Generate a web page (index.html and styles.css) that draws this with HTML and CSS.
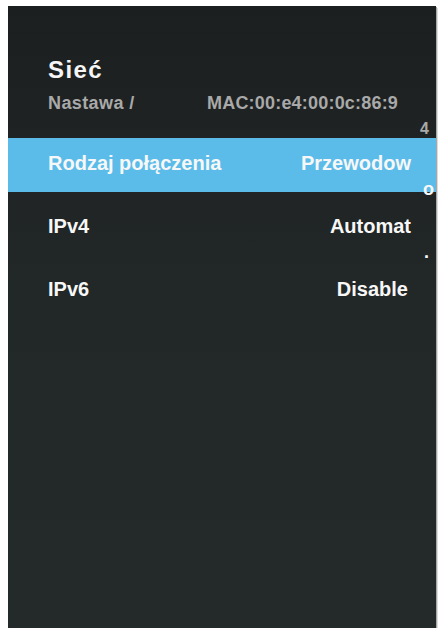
FILE: index.html
```html
<!DOCTYPE html>
<html lang="pl">
<head>
<meta charset="utf-8">
<title>Sieć</title>
<link rel="stylesheet" href="styles.css">
</head>
<body>
<div class="panel">
  <div class="header">
    <div class="title">Sieć</div>
    <div class="sub">
      <span class="crumb">Nastawa /</span>
      <span class="mac">MAC:00:e4:00:0c:86:9</span>
    </div>
    <div class="wrap-line">4</div>
  </div>
  <div class="list">
    <div class="row active">
      <span class="label">Rodzaj połączenia</span>
      <span class="value">Przewodow</span>
      <span class="tail tail-o">o</span>
    </div>
    <div class="row">
      <span class="label">IPv4</span>
      <span class="value">Automat</span>
      <span class="tail tail-dot">.</span>
    </div>
    <div class="row">
      <span class="label">IPv6</span>
      <span class="value value-narrow">Disable</span>
    </div>
  </div>
</div>
</body>
</html>
```
FILE: styles.css
```css
html, body {
  margin: 0;
  padding: 0;
  background: #ffffff;
}

body {
  font-family: "Liberation Sans", Arial, sans-serif;
}

.panel {
  margin: 6px 0 0 8px;
  width: 428px;
  height: 622px;
  background: linear-gradient(180deg, #1c1f1f 0%, #222727 45%, #242a2a 100%);
  box-shadow: 1px 1px 0 #a8a8a8, 2px 2px 0 #dcdcdc;
}

.header {
  box-sizing: border-box;
  height: 132px;
  padding-left: 40px;
}

.title {
  padding-top: 50px;
  font-size: 24px;
  line-height: 28px;
  font-weight: bold;
  letter-spacing: 1.4px;
  color: #f5f5f5;
}

.sub {
  display: grid;
  grid-template-columns: 159px auto;
  margin-top: 8px;
  font-size: 18px;
  line-height: 22px;
  font-weight: bold;
  color: #a9a9a9;
  white-space: nowrap;
}

.crumb {
  letter-spacing: 0.4px;
}

.mac {
  letter-spacing: 0.2px;
}

.wrap-line {
  margin-top: 7px;
  padding-right: 7px;
  text-align: right;
  font-size: 16px;
  line-height: 16px;
  font-weight: bold;
  color: #a9a9a9;
}

.list {
  display: flex;
  flex-direction: column;
  gap: 9px;
}

.row {
  position: relative;
  box-sizing: border-box;
  height: 54px;
  padding: 13px 25px 0 40px;
  display: flex;
  justify-content: space-between;
  align-items: flex-start;
  font-size: 20px;
  line-height: 24px;
  font-weight: bold;
  color: #f7f7f7;
  white-space: nowrap;
}

.row.active {
  background: #5bbce9;
}

.value-narrow {
  margin-right: 3px;
}

.tail {
  position: absolute;
  top: 42px;
  font-size: 18px;
  line-height: 18px;
  font-weight: bold;
  color: #f7f7f7;
}

.tail-o {
  right: 2px;
}

.tail-dot {
  right: 7px;
}
```
